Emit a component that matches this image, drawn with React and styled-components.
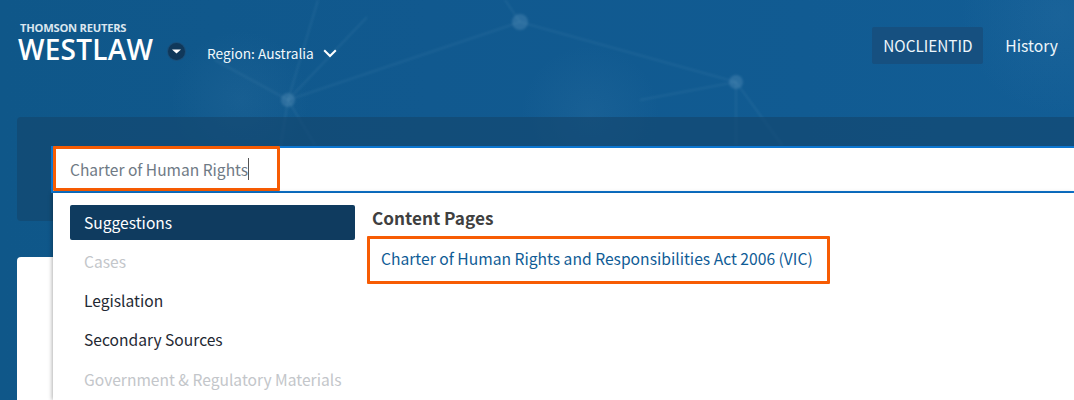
import React from "react";
import styled, { createGlobalStyle } from "styled-components";

const Global = createGlobalStyle`
  html, body { margin: 0; padding: 0; background: #0f5689; }
  body { font-family: "Noto Sans CJK SC", "Source Sans Pro", "Noto Sans", sans-serif; }
`;

const Page = styled.div`
  position: relative;
  width: 1074px;
  height: 400px;
  overflow: hidden;
  background: linear-gradient(90deg, #0f5789 0%, #11598f 40%, #115b92 75%, #125d95 100%);
`;

const Art = styled.svg`
  position: absolute;
  inset: 0;
  pointer-events: none;
`;

const Header = styled.header`
  position: relative;
  display: flex;
  align-items: flex-start;
  height: 117px;
  padding-left: 19px;
  padding-right: 16px;
  box-sizing: border-box;
  color: #fff;
`;

const Logo = styled.div`
  display: flex;
  flex-direction: column;
  width: 135px;
  margin-top: 21px;
  font-family: "Open Sans", "Liberation Sans", sans-serif;
  font-weight: 600;
  white-space: nowrap;
`;

const LogoTop = styled.span`
  font-size: 11.2px;
  font-weight: 700;
  line-height: 13px;
  letter-spacing: -0.25px;
  margin-left: 1px;
  color: #dbe6ef;
`;

const LogoMain = styled.span`
  font-size: 28px;
  line-height: 30px;
  letter-spacing: 0.25px;
  margin-left: -1px;
`;

const Caret = styled.span`
  display: flex;
  align-items: center;
  justify-content: center;
  flex: none;
  width: 17px;
  height: 17px;
  margin: 43px 0 0 14px;
  border-radius: 50%;
  background: #10385a;
  box-shadow: 0 0 0 1px #1a4f7a;
`;

const Region = styled.button`
  display: flex;
  align-items: center;
  gap: 9px;
  margin: 43px 0 0 22px;
  padding: 0;
  border: 0;
  background: none;
  color: #f2f8fc;
  font: inherit;
  font-size: 13.7px;
  line-height: 20px;
`;

const Nav = styled.nav`
  display: flex;
  align-items: center;
  margin: 27px 0 0 auto;
  gap: 22px;
`;

const ClientId = styled.span`
  display: block;
  width: 111px;
  height: 37px;
  border-radius: 2px;
  background: #165080;
  color: #eef6fb;
  font-size: 15.3px;
  line-height: 37px;
  text-align: center;
`;

const NavLink = styled.span`
  color: #eef6fb;
  font-size: 15.7px;
  line-height: 37px;
`;

const SearchPanel = styled.section`
  height: 104px;
  margin-left: 17px;
  padding: 29px 0 0 34px;
  box-sizing: border-box;
  border-radius: 4px 0 0 4px;
  background: rgba(20, 70, 108, 0.62);
  position: relative;
`;

const SearchBar = styled.div`
  display: flex;
  align-items: center;
  height: 47px;
  padding-left: 17px;
  padding-bottom: 2px;
  box-sizing: border-box;
  border-top: 2px solid #0d76d0;
  border-bottom: 2px solid #0d76d0;
  border-left: 2px solid #0d76d0;
  background: #fff;
  color: #6f7a85;
  font-size: 15.55px;
  position: relative;
`;

const Cursor = styled.span`
  display: inline-block;
  width: 1px;
  height: 22px;
  background: #555;
`;

const Highlight = styled.div`
  position: absolute;
  left: 0;
  top: -2px;
  width: 227px;
  height: 45px;
  box-sizing: border-box;
  border: 3px solid #f75c03;
  border-radius: 1px;
  pointer-events: none;
`;

const Dropdown = styled.div`
  position: absolute;
  z-index: 2;
  left: 53px;
  top: 193px;
  right: 0;
  height: 207px;
  display: grid;
  grid-template-columns: 285px 1fr;
  column-gap: 13px;
  padding: 12px 0 0 17px;
  box-sizing: border-box;
  background: #fff;
  box-shadow: -1px 0 4px rgba(0, 0, 0, 0.3);
`;

const Sidebar = styled.ul`
  list-style: none;
  margin: 0;
  padding: 0;
`;

const SideItem = styled.li`
  height: 35px;
  margin-bottom: 4.15px;
  padding-left: 14px;
  border-radius: 2px;
  font-size: 15.6px;
  line-height: 35px;
  color: ${(p) => (p.$active ? "#fff" : p.$disabled ? "#c3c6ca" : "#1f2933")};
  background: ${(p) => (p.$active ? "#0f3b5f" : "transparent")};
`;

const Results = styled.div`
  display: flex;
  flex-direction: column;
  align-items: flex-start;
  margin-left: 4px;
`;

const ResultsTitle = styled.h3`
  margin: 0 0 5px;
  font-size: 17.2px;
  font-weight: 700;
  line-height: 26px;
  color: #404040;
`;

const ResultLink = styled.a`
  display: block;
  width: 463px;
  height: 48px;
  margin-left: -5px;
  padding-left: 11px;
  box-sizing: border-box;
  border: 3px solid #f75c03;
  border-radius: 1px;
  color: #0f5c96;
  font-size: 15.65px;
  line-height: 40px;
`;

const Card = styled.div`
  position: absolute;
  left: 17px;
  top: 257px;
  right: 0;
  bottom: 0;
  border-radius: 4px 0 0 0;
  background: #fff;
`;

const lines = [
  [288, 100, 318, 0],
  [288, 100, 367, 17],
  [288, 100, 520, 22],
  [288, 100, 280, 150],
  [288, 100, 315, 145],
  [288, 100, 215, 60],
  [520, 22, 736, 82],
  [520, 22, 505, 0],
  [736, 82, 640, 100],
  [736, 82, 736, 145],
  [736, 82, 782, 145],
];
const nodes = [
  [288, 100, 7],
  [520, 22, 8],
  [736, 82, 7],
];

export default function App() {
  return (
    <Page>
      <Global />
      <Art width="1074" height="400" viewBox="0 0 1074 400">
        <defs>
          <radialGradient id="glow">
            <stop offset="0%" stopColor="#5d97c0" stopOpacity="0.1" />
            <stop offset="100%" stopColor="#5d97c0" stopOpacity="0" />
          </radialGradient>
          <filter id="soft">
            <feGaussianBlur stdDeviation="1" />
          </filter>
        </defs>
        <circle cx="240" cy="100" r="70" fill="url(#glow)" />
        <circle cx="590" cy="115" r="70" fill="url(#glow)" />
        <circle cx="1060" cy="15" r="100" fill="url(#glow)" />
        <g filter="url(#soft)">
          {lines.map(([a, b, c, d], i) => (
            <line key={i} x1={a} y1={b} x2={c} y2={d} stroke="#7fb0d2" strokeOpacity="0.1" strokeWidth="2" />
          ))}
          {nodes.map(([x, y, r], i) => (
            <circle key={i} cx={x} cy={y} r={r} fill="#7fb0d2" fillOpacity="0.24" />
          ))}
        </g>
      </Art>
      <Header>
        <Logo>
          <LogoTop>THOMSON REUTERS</LogoTop>
          <LogoMain>WESTLAW</LogoMain>
        </Logo>
        <Caret>
          <svg width="9" height="5" viewBox="0 0 9 5"><path d="M0 0.5h9L4.5 4.5z" fill="#fff" /></svg>
        </Caret>
        <Region>
          Region: Australia
          <svg width="14" height="9" viewBox="0 0 14 9" fill="none">
            <path d="M1.2 1.2 7 7l5.8-5.8" stroke="#fff" strokeWidth="2" />
          </svg>
        </Region>
        <Nav>
          <ClientId>NOCLIENTID</ClientId>
          <NavLink>History</NavLink>
        </Nav>
      </Header>
      <SearchPanel>
        <SearchBar>
          Charter of Human Rights<Cursor />
          <Highlight />
        </SearchBar>
      </SearchPanel>
      <Card />
      <Dropdown>
        <Sidebar>
          <SideItem $active>Suggestions</SideItem>
          <SideItem $disabled>Cases</SideItem>
          <SideItem>Legislation</SideItem>
          <SideItem>Secondary Sources</SideItem>
          <SideItem $disabled>Government &amp; Regulatory Materials</SideItem>
        </Sidebar>
        <Results>
          <ResultsTitle>Content Pages</ResultsTitle>
          <ResultLink>Charter of Human Rights and Responsibilities Act 2006 (VIC)</ResultLink>
        </Results>
      </Dropdown>
    </Page>
  );
}
